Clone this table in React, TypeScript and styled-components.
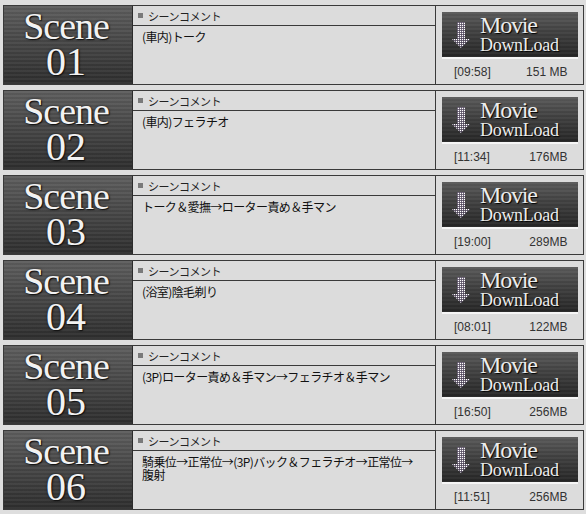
import React from "react";
import styled, { createGlobalStyle } from "styled-components";

const GlobalStyle = createGlobalStyle`
    body {
        margin: 0;
        background: #dedede;
        font-family: "Liberation Sans", "Noto Sans CJK JP", sans-serif;
    }
`;

const List = styled.div`
    display: flex;
    flex-direction: column;
    gap: 5px;
    padding: 5px 3px 0 3px;
    width: 581px;
`;

const Row = styled.div`
    display: flex;
    height: 78px;
    border: 1px solid #3a3a3a;
    background: #dcdcdc;
`;

const ScenePanel = styled.div`
    width: 128px;
    flex-shrink: 0;
    border-right: 1px solid #2c2c2c;
    background:
        repeating-linear-gradient(180deg, rgba(255, 255, 255, 0.04) 0 2px, rgba(0, 0, 0, 0.05) 2px 4px),
        linear-gradient(180deg, #5e5e5e 0%, #484848 45%, #2e2e2e 100%);
    display: flex;
    justify-content: center;
`;

// "Scene" on the first line, number on the second
const SceneLabel = styled.div`
    margin: 3px 0 0 -4px;
    font-family: "Liberation Serif", "DejaVu Serif", serif;
    font-size: 40px;
    line-height: 35px;
    text-align: center;
    color: #f2f2f2;
    text-shadow: 1px 1px 1px #111, 0 0 3px rgba(0, 0, 0, 0.6);

    &::first-line {
        font-size: 38px;
        letter-spacing: -1px;
    }
`;

const Comment = styled.div`
    width: 302px;
    flex-shrink: 0;
    border-right: 1px solid #3a3a3a;
    display: flex;
    flex-direction: column;
`;

const CommentHead = styled.div`
    height: 19px;
    border-bottom: 1px solid #3a3a3a;
    display: flex;
    align-items: center;
    gap: 5px;
    padding-left: 5px;
    font-size: 11px;
    letter-spacing: -0.5px;
    color: #222;
`;

const Bullet = styled.span`
    width: 5px;
    height: 5px;
    background: #7a7a7a;
`;

const CommentBody = styled.div`
    padding: 4px 18px 0 9px;
    font-size: 12px;
    line-height: 13px;
    letter-spacing: -0.6px;
    color: #111;
    font-family: "Noto Sans CJK JP", sans-serif;
`;

const Side = styled.div`
    flex: 1;
    display: flex;
    flex-direction: column;
    padding: 6px 7px 0 6px;
`;

const DlButton = styled.div`
    height: 45px;
    border-bottom: 2px solid #f6f6f6;
    background:
        repeating-linear-gradient(180deg, rgba(255, 255, 255, 0.03) 0 2px, rgba(0, 0, 0, 0.04) 2px 4px),
        linear-gradient(180deg, #5a5a5a 0%, #3e3e3e 50%, #262626 100%);
    display: flex;
    align-items: center;
    padding-left: 8px;
    gap: 8px;
`;

// "Movie" larger on the first line, "DownLoad" below
const DlText = styled.div`
    font-family: "Liberation Serif", "DejaVu Serif", serif;
    font-size: 18px;
    line-height: 20px;
    letter-spacing: -0.3px;
    color: #ececec;
    text-shadow: 1px 1px 1px #000;

    &::first-line {
        font-size: 24px;
        letter-spacing: -1.2px;
    }
`;

const Meta = styled.div`
    display: flex;
    justify-content: space-between;
    padding: 6px 11px 0 12px;
    font-size: 12px;
    color: #333;
`;

const Arrow = () => (
    <svg width="22" height="28" viewBox="0 0 22 28">
        <defs>
            <pattern id="dots" width="2" height="2" patternUnits="userSpaceOnUse">
                <rect width="1.2" height="1.2" fill="#fff" />
            </pattern>
        </defs>
        <path d="M7 1 H15 V18 H20 L11 27 L2 18 H7 Z" fill="rgba(110,80,140,0.35)" />
        <path d="M7 1 H15 V18 H20 L11 27 L2 18 H7 Z" fill="url(#dots)" />
    </svg>
);

type Scene = { no: string; text: string; time: string; size: string };

const scenes: Scene[] = [
    { no: "01", text: "(車内)トーク", time: "09:58", size: "151 MB" },
    { no: "02", text: "(車内)フェラチオ", time: "11:34", size: "176MB" },
    { no: "03", text: "トーク＆愛撫→ローター責め＆手マン", time: "19:00", size: "289MB" },
    { no: "04", text: "(浴室)陰毛剃り", time: "08:01", size: "122MB" },
    { no: "05", text: "(3P)ローター責め＆手マン→フェラチオ＆手マン", time: "16:50", size: "256MB" },
    { no: "06", text: "騎乗位→正常位→(3P)バック＆フェラチオ→正常位→腹射", time: "11:51", size: "256MB" },
];

const App: React.FC = () => {
    return (
        <>
            <GlobalStyle />
            <List>
                {scenes.map((s) => (
                    <Row key={s.no}>
                        <ScenePanel>
                            <SceneLabel>
                                Scene
                                <br />
                                {s.no}
                            </SceneLabel>
                        </ScenePanel>
                        <Comment>
                            <CommentHead>
                                <Bullet />
                                シーンコメント
                            </CommentHead>
                            <CommentBody>{s.text}</CommentBody>
                        </Comment>
                        <Side>
                            <DlButton>
                                <Arrow />
                                <DlText>
                                    Movie
                                    <br />
                                    DownLoad
                                </DlText>
                            </DlButton>
                            <Meta>
                                <span>[{s.time}]</span>
                                <span>{s.size}</span>
                            </Meta>
                        </Side>
                    </Row>
                ))}
            </List>
        </>
    );
};

export default App;
